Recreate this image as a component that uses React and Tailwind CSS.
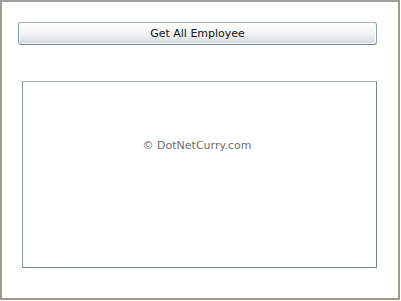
export default function App() {
  return (
    <div className="w-[401px] h-[301px] bg-white" style={{ fontFamily: '"DejaVu Sans", Verdana, sans-serif' }}>
      <div className="relative w-[400px] h-[300px] border-2 border-t-[#a0a0a0] border-l-[#a09a90] border-r-[#a0988a] border-b-[#a0988a] bg-white flex flex-col">
        <button className="ml-[16px] mt-[20px] w-[359px] h-[23px] rounded-[3px] border border-t-[#a3aeb9] border-l-[#8d9eae] border-r-[#8d9eae] border-b-[#718597] bg-gradient-to-b from-white via-[#f3f4f5] to-[#d5d9de] shadow-[inset_0_0_0_1px_rgba(255,255,255,0.8)] text-[11px] leading-[21px] text-[#111] text-center">
          Get All Employee
        </button>
        <div className="ml-[20px] mt-[36px] w-[355px] h-[187px] border border-t-[#a3aeb9] border-l-[#8399a9] border-r-[#718597] border-b-[#718597] bg-white"></div>
        <div className="absolute left-0 right-0 top-[137px] text-center text-[11px] leading-[14px] text-[#6e6e6e] pr-[6px]">
          © DotNetCurry.com
        </div>
      </div>
    </div>
  );
}
